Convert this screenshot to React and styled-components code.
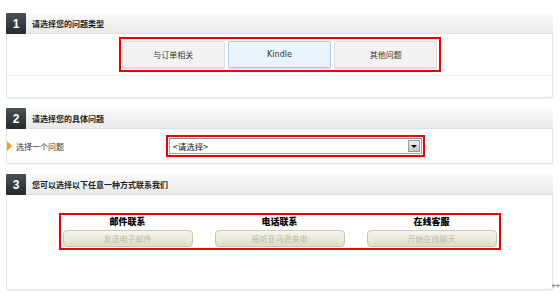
import React from "react";
import styled, { createGlobalStyle } from "styled-components";

const Global = createGlobalStyle`
  html, body { margin: 0; padding: 0; background: #fff; }
  body { font-family: "Noto Sans CJK SC", "Liberation Sans", sans-serif; color: #333; }
`;

const Page = styled.div`
  width: 560px;
  height: 296px;
  box-sizing: border-box;
  padding: 13px 7px 0 6px;
  display: flex;
  flex-direction: column;
  gap: 10px;
  position: relative;
  overflow: hidden;
`;

const Panel = styled.section`
  border: 1px solid #e4e4e4;
  border-top: none;
  border-radius: 2px;
  background: #fff;
  box-shadow: 0 1px 1px rgba(0, 0, 0, 0.05);
  display: flex;
  flex-direction: column;
`;

const Header = styled.div`
  height: 20px;
  display: flex;
  align-items: center;
  background: linear-gradient(#fbfbfb, #e9e9e9);
  border-bottom: 1px solid #e0e0e0;
  margin-left: -1px;
  margin-right: -1px;
`;

const Badge = styled.div`
  width: 20px;
  height: 21px;
  margin-bottom: -1px;
  background: linear-gradient(#4a5157, #23292d);
  color: #fff;
  font: bold 12px "Liberation Sans", Arial, sans-serif;
  display: flex;
  align-items: center;
  justify-content: center;
  border-radius: 1px;
`;

const Title = styled.h2`
  margin: 0 0 0 6px;
  font-size: 8px;
  font-weight: bold;
  color: #222;
  font-family: "Noto Sans CJK SC", sans-serif;
`;

const TabArea = styled.div`
  display: flex;
  justify-content: center;
  padding: 3px 0 3px;
`;

const RedBox = styled.div`
  border: 2px solid #ee0000;
  display: ${(p) => (p.$grid ? "grid" : "flex")};
`;

const Tabs = styled(RedBox)`
  width: 316px;
  padding: 2px 1px;
  gap: 3px;
`;

const Tab = styled.button`
  flex: 1;
  height: 27px;
  border: 1px solid ${(p) => (p.$active ? "#a8cbe8" : "#dedede")};
  border-radius: 2px;
  background: ${(p) => (p.$active ? "#e9f4fd" : "#f3f3f3")};
  box-shadow: 0 1px 0 ${(p) => (p.$active ? "#c9dff0" : "#e2e2e2")};
  font-family: ${(p) => (p.$latin ? `"DejaVu Sans", "Liberation Sans", sans-serif` : `"Noto Sans CJK SC", sans-serif`)};
  font-size: 8px;
  color: #333;
  padding: 0;
  cursor: pointer;
`;

const Footer = styled.div`
  height: 21px;
  border-top: 1px solid #f0f0f0;
`;

const QuestionRow = styled.div`
  height: 34px;
  display: flex;
  align-items: center;
`;

const Arrow = styled.span`
  width: 0;
  height: 0;
  border-top: 5px solid transparent;
  border-bottom: 5px solid transparent;
  border-left: 5px solid #f2a20c;
  margin: 0 4px 0 0;
`;

const Label = styled.span`
  font-size: 8px;
  color: #333;
  width: 150px;
`;

const SelectBox = styled(RedBox)`
  width: 253px;
  padding: 1px;
`;

const Select = styled.div`
  flex: 1;
  height: 14px;
  border: 1px solid #a5a5a5;
  border-top-color: #8a8a8a;
  background: #fff;
  display: flex;
  align-items: center;
  justify-content: space-between;
  font-size: 8.5px;
  color: #111;
  padding-left: 3px;
`;

const DropBtn = styled.span`
  width: 10px;
  height: 10px;
  margin-right: 1px;
  border: 1px solid #9a9a9a;
  background: linear-gradient(#f0f0f0, #c8c8c8);
  display: flex;
  align-items: center;
  justify-content: center;
  &::after {
    content: "";
    border-left: 3px solid transparent;
    border-right: 3px solid transparent;
    border-top: 3px solid #000;
  }
`;

const ContactArea = styled.div`
  height: 94px;
  display: flex;
  justify-content: center;
  align-items: flex-start;
  padding-top: 18px;
  box-sizing: border-box;
`;

const Contacts = styled(RedBox)`
  grid-template-columns: repeat(3, 130px);
  column-gap: 22px;
  padding: 0 2px 1px;
`;

const Contact = styled.div`
  display: flex;
  flex-direction: column;
  align-items: center;
`;

const ContactTitle = styled.div`
  font-family: "Noto Sans CJK SC", serif;
  font-weight: 900;
  font-size: 9px;
  color: #000;
  height: 13px;
  line-height: 13px;
  margin-bottom: 2px;
`;

const ContactBtn = styled.button`
  width: 130px;
  height: 17px;
  border: 1px solid #cbc9b3;
  border-radius: 4px;
  background: linear-gradient(#f8f7ee, #dedcc6);
  color: #bdbba7;
  font-family: "Noto Sans CJK SC", sans-serif;
  font-size: 8px;
  padding: 0;
  line-height: 15px;
`;

const Corner = styled.span`
  position: absolute;
  right: 0;
  bottom: 5px;
  font: 10px "DejaVu Sans", sans-serif;
  color: #888;
`;

export default function App() {
  return (
    <>
      <Global />
      <Page>
        <Panel>
          <Header>
            <Badge>1</Badge>
            <Title>请选择您的问题类型</Title>
          </Header>
          <TabArea>
            <Tabs>
              <Tab>与订单相关</Tab>
              <Tab $active $latin>Kindle</Tab>
              <Tab>其他问题</Tab>
            </Tabs>
          </TabArea>
          <Footer />
        </Panel>
        <Panel>
          <Header>
            <Badge>2</Badge>
            <Title>请选择您的具体问题</Title>
          </Header>
          <QuestionRow>
            <Arrow />
            <Label>选择一个问题</Label>
            <SelectBox>
              <Select>
                &lt;请选择&gt;
                <DropBtn />
              </Select>
            </SelectBox>
          </QuestionRow>
        </Panel>
        <Panel>
          <Header>
            <Badge>3</Badge>
            <Title>您可以选择以下任意一种方式联系我们</Title>
          </Header>
          <ContactArea>
            <Contacts $grid>
              <Contact>
                <ContactTitle>邮件联系</ContactTitle>
                <ContactBtn disabled>发送电子邮件</ContactBtn>
              </Contact>
              <Contact>
                <ContactTitle>电话联系</ContactTitle>
                <ContactBtn disabled>接听亚马逊来电</ContactBtn>
              </Contact>
              <Contact>
                <ContactTitle>在线客服</ContactTitle>
                <ContactBtn disabled>开始在线聊天</ContactBtn>
              </Contact>
            </Contacts>
          </ContactArea>
        </Panel>
        <Corner>↔</Corner>
      </Page>
    </>
  );
}
